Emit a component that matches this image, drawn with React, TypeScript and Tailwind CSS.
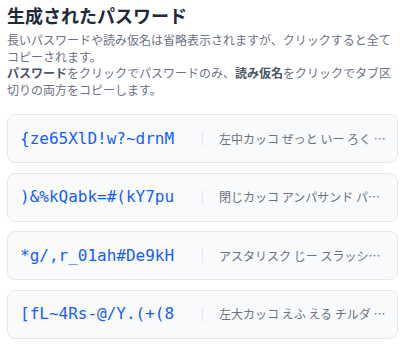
import React from 'react';

interface Generated {
  password: string;
  reading: string;
}

const passwords: Generated[] = [
  { password: '{ze65XlD!w?~drnM', reading: '左中カッコ ぜっと いー ろく ご えっくす える でぃー びっくり だぶりゅー はてな チルダ でぃー あーる えぬ えむ' },
  { password: ')&%kQabk=#(kY7pu', reading: '閉じカッコ アンパサンド パーセント けー きゅー えー びー けー イコール シャープ 開きカッコ けー わい なな ぴー ゆー' },
  { password: '*g/,r_01ah#De9kH', reading: 'アスタリスク じー スラッシュ カンマ あーる アンダーバー ぜろ いち えー えいち シャープ でぃー いー きゅう けー えいち' },
  { password: '[fL~4Rs-@/Y.(+(8', reading: '左大カッコ えふ える チルダ よん あーる えす ハイフン アットマーク スラッシュ わい ピリオド 開きカッコ プラス 開きカッコ はち' },
];

const sans = "font-['Noto_Sans_CJK_JP','Noto_Sans',sans-serif]";

const PasswordRow: React.FC<{ item: Generated }> = ({ item }) => {
  return (
    <div className="h-[49px] rounded-lg border border-gray-200 bg-gray-50 pl-3 pr-[10px] flex items-center cursor-pointer">
      <span className="font-['DejaVu_Sans_Mono',monospace] text-[16px] text-blue-600 whitespace-nowrap w-[172px] shrink-0">
        {item.password}
      </span>
      <span className="w-px h-[15px] bg-gray-200 mr-4 ml-[10px] shrink-0"></span>
      <span className={`${sans} text-[12px] text-gray-500 truncate min-w-0 flex-1`}>
        {item.reading}
      </span>
    </div>
  );
};

export default function App() {
  return (
    <div className={`${sans} bg-white px-[7px] pt-[1px] pb-4 w-[412px]`}>
      <h2 className="text-[18px] leading-[28px] font-bold text-gray-800">生成されたパスワード</h2>
      <p className="mt-[3px] w-[391px] text-[12px] leading-[16.5px] text-gray-500">
        長いパスワードや読み仮名は省略表示されますが、クリックすると全てコピーされます。
        <br />
        <b className="font-bold text-gray-600">パスワード</b>をクリックでパスワードのみ、<b className="font-bold text-gray-600">読み仮名</b>をクリックでタブ区切りの両方をコピーします。
      </p>
      <div className="mt-4 flex flex-col gap-[9.5px] w-[391px]">
        {passwords.map(p => (
          <PasswordRow key={p.password} item={p} />
        ))}
      </div>
    </div>
  );
}
